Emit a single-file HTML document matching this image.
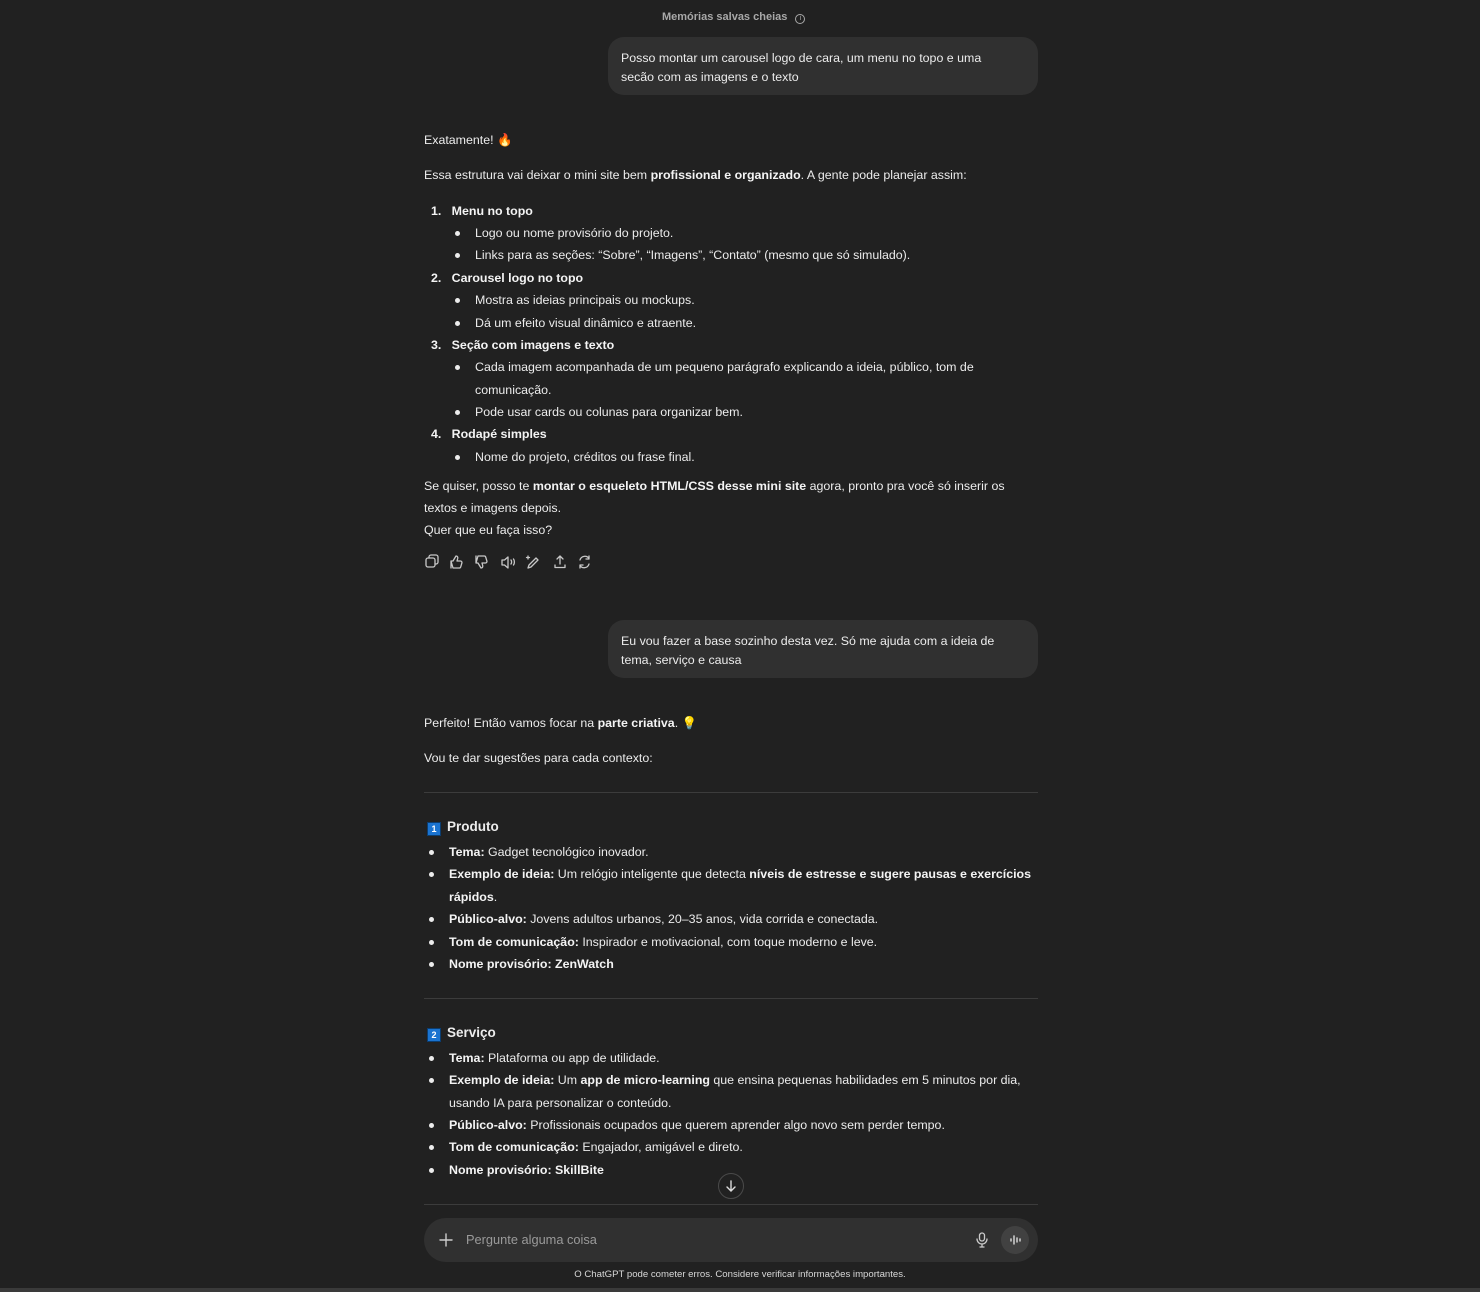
<!DOCTYPE html>
<html><head><meta charset="utf-8"><style>
*{margin:0;padding:0;box-sizing:border-box}
html,body{width:1480px;height:1292px;background:#212121;overflow:hidden;font-family:"Liberation Sans",sans-serif;color:#ececec;font-size:12.4px}
.l{position:absolute;left:424px;height:18px;line-height:18px;white-space:nowrap}
b{font-weight:bold;color:#f4f4f4}
.n1{left:431px}
.s1{left:475px}
.s1::before{content:"";position:absolute;left:-20px;top:7px;width:5px;height:5px;border-radius:50%;background:#ececec}
.s2{left:449px}
.s2::before{content:"";position:absolute;left:-20px;top:7px;width:5px;height:5px;border-radius:50%;background:#ececec}
.c{left:449px}
.bub{position:absolute;left:608px;width:430px;background:#303030;border-radius:16px;padding:12px 13px 9px;line-height:19px}
.hr{position:absolute;left:424px;width:614px;height:1px;background:#3c3c3c}
.num{display:inline-block;width:14px;height:14px;background:#1a73d0;color:#fff;font-size:9px;line-height:13px;text-align:center;border:1px solid #0b3d70;vertical-align:-1px;margin-right:6px;margin-left:3px}
.h{font-size:13.5px;font-weight:bold}
</style></head><body>
<div style="position:absolute;top:9px;left:662px;font-size:11px;color:#a8a8a8;font-weight:bold;line-height:16px">Memórias salvas cheias <span style="display:inline-block;width:10px;height:10px;border:1px solid #a8a8a8;border-radius:50%;font-size:7px;line-height:8px;text-align:center;margin-left:5px;font-weight:normal">i</span></div>
<div class="bub" style="top:37px;height:58px">Posso montar um carousel logo de cara, um menu no topo e uma<br>secão com as imagens e o texto</div>

<div class="l" style="top:131px">Exatamente! <span style="color:#f57c1f">&#x1F525;</span></div>
<div class="l" style="top:166px">Essa estrutura vai deixar o mini site bem <b>profissional e organizado</b>. A gente pode planejar assim:</div>
<div class="l n1" style="top:202px"><b>1.&nbsp;&nbsp; Menu no topo</b></div>
<div class="l s1" style="top:224px">Logo ou nome provisório do projeto.</div>
<div class="l s1" style="top:246px">Links para as seções: “Sobre”, “Imagens”, “Contato” (mesmo que só simulado).</div>
<div class="l n1" style="top:269px"><b>2.&nbsp;&nbsp; Carousel logo no topo</b></div>
<div class="l s1" style="top:291px">Mostra as ideias principais ou mockups.</div>
<div class="l s1" style="top:314px">Dá um efeito visual dinâmico e atraente.</div>
<div class="l n1" style="top:336px"><b>3.&nbsp;&nbsp; Seção com imagens e texto</b></div>
<div class="l s1" style="top:358px">Cada imagem acompanhada de um pequeno parágrafo explicando a ideia, público, tom de</div>
<div class="l" style="top:381px;left:475px">comunicação.</div>
<div class="l s1" style="top:403px">Pode usar cards ou colunas para organizar bem.</div>
<div class="l n1" style="top:425px"><b>4.&nbsp;&nbsp; Rodapé simples</b></div>
<div class="l s1" style="top:448px">Nome do projeto, créditos ou frase final.</div>
<div class="l" style="top:477px">Se quiser, posso te <b>montar o esqueleto HTML/CSS desse mini site</b> agora, pronto pra você só inserir os</div>
<div class="l" style="top:499px">textos e imagens depois.</div>
<div class="l" style="top:521px">Quer que eu faça isso?</div>

<svg style="position:absolute;left:424px;top:553px" width="175" height="18" viewBox="0 0 175 18" fill="none" stroke="#c8c8c8" stroke-width="1.3" stroke-linecap="round" stroke-linejoin="round">
<rect x="2" y="5" width="9" height="9" rx="2"/><path d="M5 5V4a2 2 0 0 1 2-2h5a2 2 0 0 1 2 2v5a2 2 0 0 1-2 2h-1"/>
<path d="M27 8h2l3-5c1.5 0 2 1 1.7 2.5L33 8h3.5a1.5 1.5 0 0 1 1.4 1.9l-1.2 4a1.5 1.5 0 0 1-1.4 1.1H29zM27 8v7"/>
<path d="M52 10h2l3 5c1.5 0 2-1 1.7-2.5L58 10h3.5a1.5 1.5 0 0 0 1.4-1.9l-1.2-4A1.5 1.5 0 0 0 60.3 3H54zM52 10V3"/>
<path d="M78 7h2.5l3.5-3v11l-3.5-3H78zM87 7c.8.8.8 3.2 0 4M89.5 6c1.2 1.5 1.2 4.5 0 6"/>
<path d="M104 15l1-3 7-7 2 2-7 7zM104 3v3M102.5 4.5h3"/>
<path d="M141 12v2.5h-10V12M136 11V3M133 6l3-3 3 3"/>
<path d="M156 7a5 5 0 0 1 9-1.5M165 3v3h-3M165 11a5 5 0 0 1-9 1.5M156 15v-3h3"/>
</svg>

<div class="bub" style="top:620px;height:58px">Eu vou fazer a base sozinho desta vez. Só me ajuda com a ideia de<br>tema, serviço e causa</div>

<div class="l" style="top:714px">Perfeito! Então vamos focar na <b>parte criativa</b>. <span style="color:#f6c343">&#x1F4A1;</span></div>
<div class="l" style="top:749px">Vou te dar sugestões para cada contexto:</div>
<div class="hr" style="top:792px"></div>
<div class="l h" style="top:818px"><span class="num">1</span>Produto</div>
<div class="l s2" style="top:843px"><b>Tema:</b> Gadget tecnológico inovador.</div>
<div class="l s2" style="top:865px"><b>Exemplo de ideia:</b> Um relógio inteligente que detecta <b>níveis de estresse e sugere pausas e exercícios</b></div>
<div class="l c" style="top:888px"><b>rápidos</b>.</div>
<div class="l s2" style="top:910px"><b>Público-alvo:</b> Jovens adultos urbanos, 20–35 anos, vida corrida e conectada.</div>
<div class="l s2" style="top:933px"><b>Tom de comunicação:</b> Inspirador e motivacional, com toque moderno e leve.</div>
<div class="l s2" style="top:955px"><b>Nome provisório: ZenWatch</b></div>
<div class="hr" style="top:998px"></div>
<div class="l h" style="top:1024px"><span class="num">2</span>Serviço</div>
<div class="l s2" style="top:1049px"><b>Tema:</b> Plataforma ou app de utilidade.</div>
<div class="l s2" style="top:1071px"><b>Exemplo de ideia:</b> Um <b>app de micro-learning</b> que ensina pequenas habilidades em 5 minutos por dia,</div>
<div class="l c" style="top:1094px">usando IA para personalizar o conteúdo.</div>
<div class="l s2" style="top:1116px"><b>Público-alvo:</b> Profissionais ocupados que querem aprender algo novo sem perder tempo.</div>
<div class="l s2" style="top:1138px"><b>Tom de comunicação:</b> Engajador, amigável e direto.</div>
<div class="l s2" style="top:1161px"><b>Nome provisório: SkillBite</b></div>

<div style="position:absolute;left:718px;top:1173px;width:26px;height:26px;border-radius:50%;border:1px solid #4a4a4a;background:#212121"></div>
<svg style="position:absolute;left:724px;top:1179px" width="14" height="14" fill="none" stroke="#ddd" stroke-width="1.4" stroke-linecap="round"><path d="M7 2v10M3 8l4 4 4-4"/></svg>
<div class="hr" style="top:1204px"></div>

<div style="position:absolute;left:424px;top:1218px;width:614px;height:44px;border-radius:22px;background:#303030"></div>
<svg style="position:absolute;left:439px;top:1233px" width="14" height="14" stroke="#ccc" stroke-width="1.4" stroke-linecap="round"><path d="M7 1v12M1 7h12"/></svg>
<div style="position:absolute;left:466px;top:1231px;line-height:18px;font-size:12.8px;color:#9a9a9a">Pergunte alguma coisa</div>
<svg style="position:absolute;left:975px;top:1232px" width="14" height="16" fill="none" stroke="#ccc" stroke-width="1.3" stroke-linecap="round"><rect x="4.5" y="1" width="5" height="8" rx="2.5"/><path d="M2 7a5 5 0 0 0 10 0M7 12v3M5 15h4"/></svg>
<div style="position:absolute;left:1001px;top:1226px;width:28px;height:28px;border-radius:50%;background:#414141"></div>
<svg style="position:absolute;left:1008px;top:1233px" width="14" height="14" stroke="#ddd" stroke-width="1.4" stroke-linecap="round"><path d="M3 6v2M6 3v8M9 5v4M12 6v2"/></svg>
<div style="position:absolute;left:0;width:1480px;top:1268px;text-align:center;font-size:9.6px;color:#d8d8d8;line-height:14px">O ChatGPT pode cometer erros. Considere verificar informações importantes.</div>
<div style="position:absolute;left:0;top:1288px;width:1480px;height:4px;background:#3a3a3a"></div>
</body></html>
